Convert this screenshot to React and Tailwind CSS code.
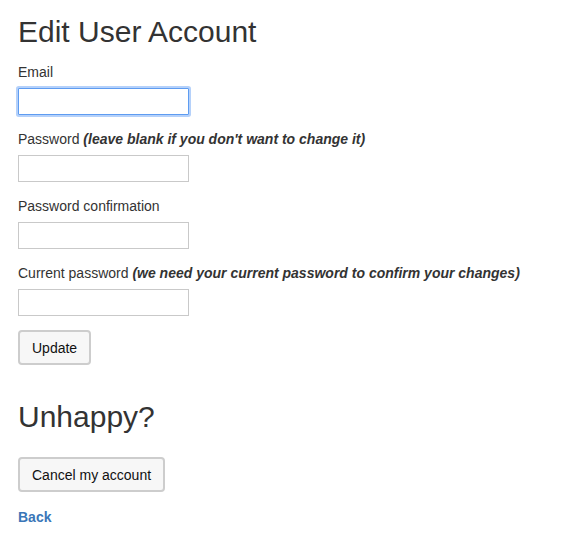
export default function App() {
  const font = { fontFamily: '"Liberation Sans", Arial, Helvetica, sans-serif' };
  const fields = [
    { label: "Email", note: null, focus: true },
    { label: "Password", note: "(leave blank if you don't want to change it)" },
    { label: "Password confirmation", note: null },
    { label: "Current password", note: "(we need your current password to confirm your changes)" },
  ];
  return (
    <div className="min-h-[541px] bg-white pl-[18px] text-[#333333]" style={font}>
      <h1 className="pt-[15px] text-[30px] leading-[33px] font-normal text-[#333333]">Edit User Account</h1>
      <form className="mt-[14px] flex flex-col" onSubmit={(e) => e.preventDefault()}>
        {fields.map((f, i) => (
          <div key={i} className="flex flex-col mb-[14px]">
            <label className="h-[20px] text-[14px] leading-[20px] mb-[6px]">
              {f.label}
              {f.note && <em className="font-bold italic"> {f.note}</em>}
            </label>
            {f.focus ? (
              <input
                type="email"
                className="w-[171px] h-[27px] bg-white border border-[#5e9cf1] rounded-[1px] outline-none shadow-[0_0_0_2px_rgba(120,172,245,0.55)] px-1 text-[14px]"
              />
            ) : (
              <input
                type="password"
                className="w-[171px] h-[27px] bg-white border border-[#c9c9c9] outline-none px-1 text-[14px]"
              />
            )}
          </div>
        ))}
        <div>
          <button
            type="submit"
            className="h-[35px] px-[12px] text-[14px] leading-[20px] text-[#111] bg-[#f7f7f7] border-2 border-[#cdcdcd] rounded-[4px]"
          >
            Update
          </button>
        </div>
      </form>
      <h2 className="mt-[35px] text-[30px] leading-[33px] font-normal text-[#333333]">Unhappy?</h2>
      <div className="mt-[24px]">
        <button
          type="button"
          className="h-[35px] px-[12px] text-[14px] leading-[20px] text-[#111] bg-[#f7f7f7] border-2 border-[#cdcdcd] rounded-[4px]"
        >
          Cancel my account
        </button>
      </div>
      <div className="mt-[15px] text-[14px] leading-[20px]">
        <a href="#" className="font-bold text-[#3a76b8]">Back</a>
      </div>
    </div>
  );
}
